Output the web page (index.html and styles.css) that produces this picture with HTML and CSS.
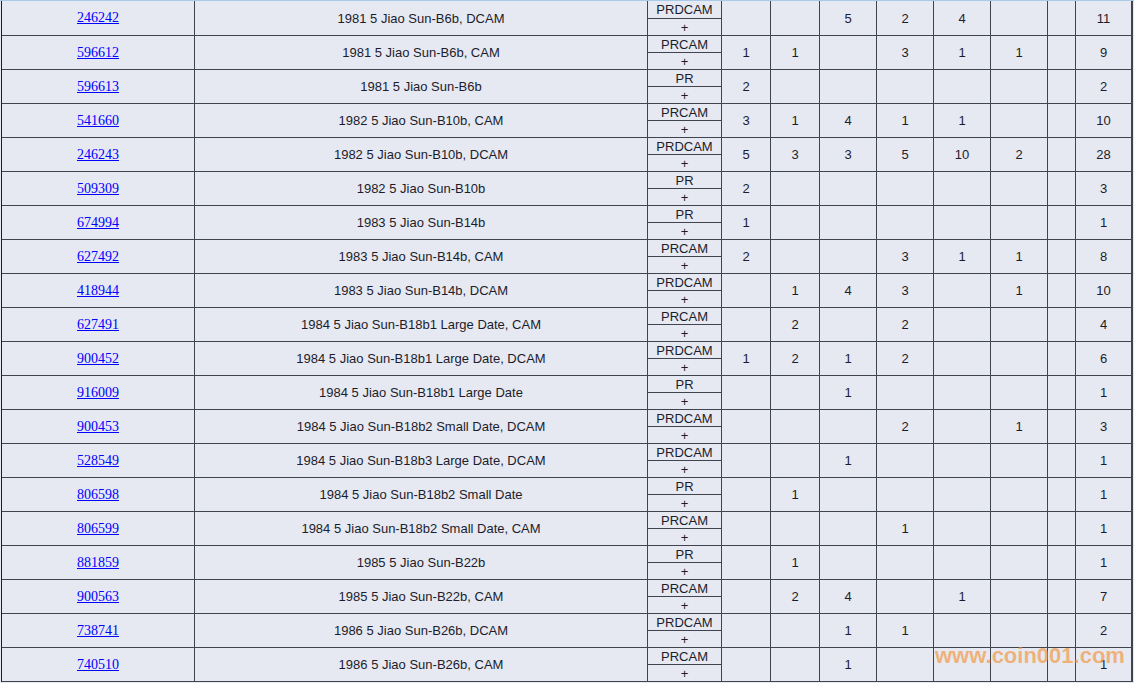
FILE: index.html
```html
<!DOCTYPE html>
<html>
<head>
<meta charset="utf-8">
<link rel="stylesheet" href="styles.css">
</head>
<body>
<div class="topline"></div>
<div class="table">
  <div class="row first"><div class="c id"><a href="#">246242</a></div><div class="c">1981 5 Jiao Sun-B6b, DCAM</div><div class="c grade"><div class="gt">PRDCAM</div><div class="gb">+</div></div><div class="c"></div><div class="c"></div><div class="c">5</div><div class="c">2</div><div class="c">4</div><div class="c"></div><div class="c"></div><div class="c">11</div></div>
  <div class="row"><div class="c id"><a href="#">596612</a></div><div class="c">1981 5 Jiao Sun-B6b, CAM</div><div class="c grade"><div class="gt">PRCAM</div><div class="gb">+</div></div><div class="c">1</div><div class="c">1</div><div class="c"></div><div class="c">3</div><div class="c">1</div><div class="c">1</div><div class="c"></div><div class="c">9</div></div>
  <div class="row"><div class="c id"><a href="#">596613</a></div><div class="c">1981 5 Jiao Sun-B6b</div><div class="c grade"><div class="gt">PR</div><div class="gb">+</div></div><div class="c">2</div><div class="c"></div><div class="c"></div><div class="c"></div><div class="c"></div><div class="c"></div><div class="c"></div><div class="c">2</div></div>
  <div class="row"><div class="c id"><a href="#">541660</a></div><div class="c">1982 5 Jiao Sun-B10b, CAM</div><div class="c grade"><div class="gt">PRCAM</div><div class="gb">+</div></div><div class="c">3</div><div class="c">1</div><div class="c">4</div><div class="c">1</div><div class="c">1</div><div class="c"></div><div class="c"></div><div class="c">10</div></div>
  <div class="row"><div class="c id"><a href="#">246243</a></div><div class="c">1982 5 Jiao Sun-B10b, DCAM</div><div class="c grade"><div class="gt">PRDCAM</div><div class="gb">+</div></div><div class="c">5</div><div class="c">3</div><div class="c">3</div><div class="c">5</div><div class="c">10</div><div class="c">2</div><div class="c"></div><div class="c">28</div></div>
  <div class="row"><div class="c id"><a href="#">509309</a></div><div class="c">1982 5 Jiao Sun-B10b</div><div class="c grade"><div class="gt">PR</div><div class="gb">+</div></div><div class="c">2</div><div class="c"></div><div class="c"></div><div class="c"></div><div class="c"></div><div class="c"></div><div class="c"></div><div class="c">3</div></div>
  <div class="row"><div class="c id"><a href="#">674994</a></div><div class="c">1983 5 Jiao Sun-B14b</div><div class="c grade"><div class="gt">PR</div><div class="gb">+</div></div><div class="c">1</div><div class="c"></div><div class="c"></div><div class="c"></div><div class="c"></div><div class="c"></div><div class="c"></div><div class="c">1</div></div>
  <div class="row"><div class="c id"><a href="#">627492</a></div><div class="c">1983 5 Jiao Sun-B14b, CAM</div><div class="c grade"><div class="gt">PRCAM</div><div class="gb">+</div></div><div class="c">2</div><div class="c"></div><div class="c"></div><div class="c">3</div><div class="c">1</div><div class="c">1</div><div class="c"></div><div class="c">8</div></div>
  <div class="row"><div class="c id"><a href="#">418944</a></div><div class="c">1983 5 Jiao Sun-B14b, DCAM</div><div class="c grade"><div class="gt">PRDCAM</div><div class="gb">+</div></div><div class="c"></div><div class="c">1</div><div class="c">4</div><div class="c">3</div><div class="c"></div><div class="c">1</div><div class="c"></div><div class="c">10</div></div>
  <div class="row"><div class="c id"><a href="#">627491</a></div><div class="c">1984 5 Jiao Sun-B18b1 Large Date, CAM</div><div class="c grade"><div class="gt">PRCAM</div><div class="gb">+</div></div><div class="c"></div><div class="c">2</div><div class="c"></div><div class="c">2</div><div class="c"></div><div class="c"></div><div class="c"></div><div class="c">4</div></div>
  <div class="row"><div class="c id"><a href="#">900452</a></div><div class="c">1984 5 Jiao Sun-B18b1 Large Date, DCAM</div><div class="c grade"><div class="gt">PRDCAM</div><div class="gb">+</div></div><div class="c">1</div><div class="c">2</div><div class="c">1</div><div class="c">2</div><div class="c"></div><div class="c"></div><div class="c"></div><div class="c">6</div></div>
  <div class="row"><div class="c id"><a href="#">916009</a></div><div class="c">1984 5 Jiao Sun-B18b1 Large Date</div><div class="c grade"><div class="gt">PR</div><div class="gb">+</div></div><div class="c"></div><div class="c"></div><div class="c">1</div><div class="c"></div><div class="c"></div><div class="c"></div><div class="c"></div><div class="c">1</div></div>
  <div class="row"><div class="c id"><a href="#">900453</a></div><div class="c">1984 5 Jiao Sun-B18b2 Small Date, DCAM</div><div class="c grade"><div class="gt">PRDCAM</div><div class="gb">+</div></div><div class="c"></div><div class="c"></div><div class="c"></div><div class="c">2</div><div class="c"></div><div class="c">1</div><div class="c"></div><div class="c">3</div></div>
  <div class="row"><div class="c id"><a href="#">528549</a></div><div class="c">1984 5 Jiao Sun-B18b3 Large Date, DCAM</div><div class="c grade"><div class="gt">PRDCAM</div><div class="gb">+</div></div><div class="c"></div><div class="c"></div><div class="c">1</div><div class="c"></div><div class="c"></div><div class="c"></div><div class="c"></div><div class="c">1</div></div>
  <div class="row"><div class="c id"><a href="#">806598</a></div><div class="c">1984 5 Jiao Sun-B18b2 Small Date</div><div class="c grade"><div class="gt">PR</div><div class="gb">+</div></div><div class="c"></div><div class="c">1</div><div class="c"></div><div class="c"></div><div class="c"></div><div class="c"></div><div class="c"></div><div class="c">1</div></div>
  <div class="row"><div class="c id"><a href="#">806599</a></div><div class="c">1984 5 Jiao Sun-B18b2 Small Date, CAM</div><div class="c grade"><div class="gt">PRCAM</div><div class="gb">+</div></div><div class="c"></div><div class="c"></div><div class="c"></div><div class="c">1</div><div class="c"></div><div class="c"></div><div class="c"></div><div class="c">1</div></div>
  <div class="row"><div class="c id"><a href="#">881859</a></div><div class="c">1985 5 Jiao Sun-B22b</div><div class="c grade"><div class="gt">PR</div><div class="gb">+</div></div><div class="c"></div><div class="c">1</div><div class="c"></div><div class="c"></div><div class="c"></div><div class="c"></div><div class="c"></div><div class="c">1</div></div>
  <div class="row"><div class="c id"><a href="#">900563</a></div><div class="c">1985 5 Jiao Sun-B22b, CAM</div><div class="c grade"><div class="gt">PRCAM</div><div class="gb">+</div></div><div class="c"></div><div class="c">2</div><div class="c">4</div><div class="c"></div><div class="c">1</div><div class="c"></div><div class="c"></div><div class="c">7</div></div>
  <div class="row"><div class="c id"><a href="#">738741</a></div><div class="c">1986 5 Jiao Sun-B26b, DCAM</div><div class="c grade"><div class="gt">PRDCAM</div><div class="gb">+</div></div><div class="c"></div><div class="c"></div><div class="c">1</div><div class="c">1</div><div class="c"></div><div class="c"></div><div class="c"></div><div class="c">2</div></div>
  <div class="row"><div class="c id"><a href="#">740510</a></div><div class="c">1986 5 Jiao Sun-B26b, CAM</div><div class="c grade"><div class="gt">PRCAM</div><div class="gb">+</div></div><div class="c"></div><div class="c"></div><div class="c">1</div><div class="c"></div><div class="c"></div><div class="c"></div><div class="c"></div><div class="c">1</div></div>
</div>
<div class="watermark">www.coin001.com</div>
</body>
</html>
```

FILE: styles.css
```css
html, body {
  margin: 0;
  padding: 0;
  background: #e6e9f2;
  overflow: hidden;
}
body {
  position: relative;
  width: 1134px;
  height: 683px;
  font-family: "Liberation Sans", Arial, sans-serif;
  font-size: 13px;
  color: #1c1c2c;
}
.topline {
  height: 1px;
  background: #a9c9e9;
}
.table {
  margin-left: 1px;
  width: 1130px;
  display: flex;
  flex-direction: column;
  gap: 1px;
  background: #40444e;
  border-left: 1px solid #1e1e22;
  padding: 0 1px 1px 0;
}
.row {
  display: grid;
  grid-template-columns: 192px 452px 73px 48px 48px 56px 56px 56px 56px 27px 55px;
  column-gap: 1px;
  height: 33px;
}
.row.first {
  height: 34px;
}
.c {
  background: #e6e9f2;
  display: flex;
  align-items: center;
  justify-content: center;
  white-space: nowrap;
  overflow: hidden;
}
.id a {
  font-family: "Liberation Serif", "Times New Roman", serif;
  font-size: 14px;
  color: #0000ff;
  text-decoration: underline;
}
.grade {
  flex-direction: column;
  align-items: stretch;
}
.gt {
  flex: 1;
  display: flex;
  align-items: center;
  justify-content: center;
}
.gb {
  height: 16px;
  border-top: 1px solid #40444e;
  display: flex;
  align-items: center;
  justify-content: center;
}
.watermark {
  position: absolute;
  left: 935px;
  top: 643px;
  font-family: "Liberation Sans", Arial, sans-serif;
  font-weight: bold;
  font-size: 22px;
  color: rgba(245, 140, 40, 0.6);
  white-space: nowrap;
}
```
